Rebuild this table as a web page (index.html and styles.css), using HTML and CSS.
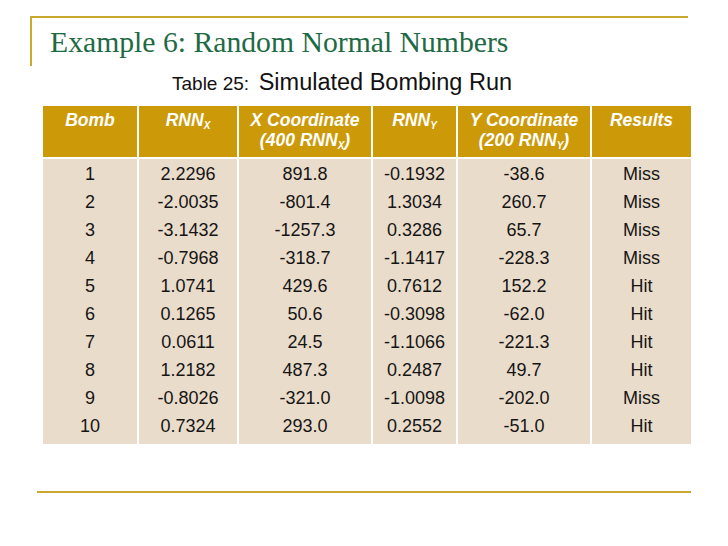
FILE: index.html
```html
<!DOCTYPE html>
<html>
<head>
<meta charset="utf-8">
<link rel="stylesheet" href="styles.css">
</head>
<body>
<div class="slide">
  <div class="frame">
    <h1 class="title">Example 6: Random Normal Numbers</h1>
  </div>
  <p class="caption"><span class="cap-small">Table 25:</span> Simulated Bombing Run</p>
  <table class="data">
    <colgroup>
      <col class="c1"><col class="c2"><col class="c3"><col class="c4"><col class="c5"><col class="c6">
    </colgroup>
    <thead>
      <tr>
        <th>Bomb</th>
        <th>RNN<sub>X</sub></th>
        <th>X Coordinate<br>(400 RNN<sub>X</sub>)</th>
        <th>RNN<sub>Y</sub></th>
        <th>Y Coordinate<br>(200 RNN<sub>Y</sub>)</th>
        <th>Results</th>
      </tr>
    </thead>
    <tbody>
      <tr><td>1</td><td>2.2296</td><td>891.8</td><td>-0.1932</td><td>-38.6</td><td>Miss</td></tr>
      <tr><td>2</td><td>-2.0035</td><td>-801.4</td><td>1.3034</td><td>260.7</td><td>Miss</td></tr>
      <tr><td>3</td><td>-3.1432</td><td>-1257.3</td><td>0.3286</td><td>65.7</td><td>Miss</td></tr>
      <tr><td>4</td><td>-0.7968</td><td>-318.7</td><td>-1.1417</td><td>-228.3</td><td>Miss</td></tr>
      <tr><td>5</td><td>1.0741</td><td>429.6</td><td>0.7612</td><td>152.2</td><td>Hit</td></tr>
      <tr><td>6</td><td>0.1265</td><td>50.6</td><td>-0.3098</td><td>-62.0</td><td>Hit</td></tr>
      <tr><td>7</td><td>0.0611</td><td>24.5</td><td>-1.1066</td><td>-221.3</td><td>Hit</td></tr>
      <tr><td>8</td><td>1.2182</td><td>487.3</td><td>0.2487</td><td>49.7</td><td>Hit</td></tr>
      <tr><td>9</td><td>-0.8026</td><td>-321.0</td><td>-1.0098</td><td>-202.0</td><td>Miss</td></tr>
      <tr><td>10</td><td>0.7324</td><td>293.0</td><td>0.2552</td><td>-51.0</td><td>Hit</td></tr>
    </tbody>
  </table>
  <div class="bottom-rule"></div>
</div>
</body>
</html>
```

FILE: styles.css
```css
html, body {
  margin: 0;
  padding: 0;
  background: #ffffff;
}

.slide {
  width: 728px;
  height: 546px;
  padding-top: 16px;
  box-sizing: border-box;
  font-family: "Liberation Sans", Arial, sans-serif;
}

.frame {
  margin-left: 30px;
  width: 656px;
  height: 48px;
  border-top: 2px solid #c9a82e;
  border-left: 2px solid #c9a82e;
}

.title {
  margin: 10px 0 0 18px;
  font-family: "Liberation Serif", "Times New Roman", serif;
  font-weight: normal;
  font-size: 29.7px;
  line-height: 28px;
  color: #1e6a44;
}

.caption {
  margin: 3px 0 0 172px;
  font-size: 23.5px;
  line-height: 26px;
  color: #111111;
}

.cap-small {
  font-size: 19px;
  margin-right: 3px;
}

.data {
  margin: 9px 0 0 43px;
  width: 648px;
  table-layout: fixed;
  border-collapse: collapse;
  color: #151515;
}

.c1 { width: 95px; }
.c2 { width: 100px; }
.c3 { width: 134px; }
.c4 { width: 85px; }
.c5 { width: 134px; }
.c6 { width: 100px; }

.data th,
.data td {
  padding: 0;
  text-align: center;
  border-left: 2px solid #ffffff;
}

.data th:first-child,
.data td:first-child {
  border-left: none;
}

.data th {
  background: #cc9a08;
  color: #ffffff;
  font-weight: bold;
  font-style: italic;
  font-size: 17.5px;
  line-height: 20px;
  height: 52px;
  box-sizing: border-box;
  padding-top: 4px;
  vertical-align: top;
  border-bottom: 2px solid #ffffff;
}

.data sub {
  font-size: 10px;
  line-height: 0;
  vertical-align: -3px;
}

.data td {
  background: #eadccb;
  font-size: 18px;
  line-height: 28px;
}

.data tbody tr:first-child td {
  padding-top: 1px;
}

.data tbody tr:last-child td {
  padding-bottom: 4px;
}

.bottom-rule {
  margin: 47px 0 0 37px;
  width: 654px;
  height: 2px;
  background: #c9a82e;
}
```
